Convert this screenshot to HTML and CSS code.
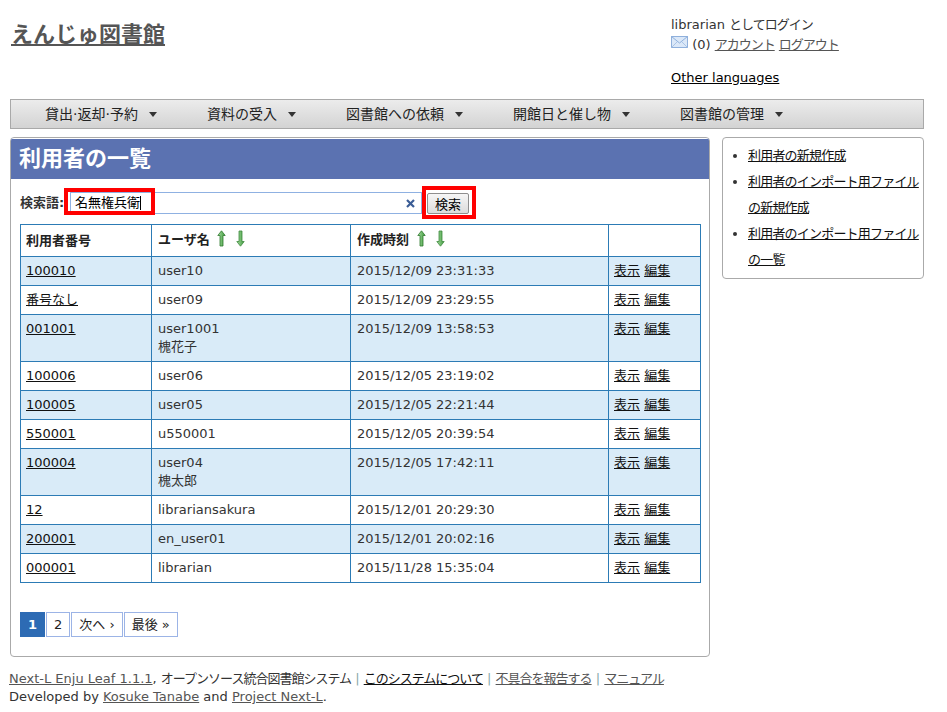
FILE: index.html
```html
<!DOCTYPE html>
<html lang="ja">
<head>
<meta charset="utf-8">
<title>利用者の一覧</title>
<link rel="stylesheet" href="styles.css">
</head>
<body>
<div class="page">
  <header class="header">
    <div class="brand"><a href="#">えんじゅ図書館</a></div>
    <div class="account">
      <div class="acc-line">librarian <span class="ja">としてログイン</span></div>
      <div class="acc-line">
        <svg class="mail" width="17" height="12" viewBox="0 0 17 12"><rect x="0.5" y="0.5" width="16" height="11" fill="#dbe8f8" stroke="#8fb0dc"/><path d="M0.5 0.5 L8.5 7 L16.5 0.5" fill="none" stroke="#8fb0dc"/><path d="M0.5 11.5 L6 6 M16.5 11.5 L11 6" fill="none" stroke="#aac4e6"/></svg>
        <span class="count">(0)</span> <a class="gray ja" href="#">アカウント</a> <a class="gray ja" href="#">ログアウト</a>
      </div>
      <div class="acc-lang"><a href="#">Other languages</a></div>
    </div>
  </header>

  <nav class="nav">
    <ul class="nav-list">
      <li class="nav-item">貸出·返却·予約<span class="caret"></span></li>
      <li class="nav-item">資料の受入<span class="caret"></span></li>
      <li class="nav-item">図書館への依頼<span class="caret"></span></li>
      <li class="nav-item">開館日と催し物<span class="caret"></span></li>
      <li class="nav-item">図書館の管理<span class="caret"></span></li>
    </ul>
  </nav>

  <div class="layout">
    <main class="panel">
      <h1 class="panel-title">利用者の一覧</h1>
      <div class="panel-body">
        <form class="search">
          <label class="search-label">検索語:</label>
          <div class="search-field">
            <div class="search-input"><span class="search-text">名無権兵衛</span><span class="caret-line"></span>
              <svg class="clear" width="9" height="9" viewBox="0 0 9 9"><path d="M1 1 L8 8 M8 1 L1 8" stroke="#3b5d96" stroke-width="2.2"/></svg>
            </div>
            <span class="mark mark-input"></span>
          </div>
          <div class="search-btn-wrap">
            <button type="button" class="search-btn">検索</button>
            <span class="mark mark-btn"></span>
          </div>
        </form>

        <table class="users">
          <colgroup><col class="c1"><col class="c2"><col class="c3"><col class="c4"></colgroup>
          <thead>
            <tr>
              <th>利用者番号</th>
              <th>ユーザ名 <span class="sort"><svg width="9" height="17" viewBox="0 0 9 17"><defs><linearGradient id="gu" x1="0" x2="1"><stop offset="0" stop-color="#a8dca0"/><stop offset="1" stop-color="#3d9a3d"/></linearGradient></defs><path d="M4.5 0.8 L8.2 5.5 L6 5.5 L6 16 L3 16 L3 5.5 L0.8 5.5 Z" fill="url(#gu)" stroke="#2f7a2f" stroke-width="0.8"/></svg><svg width="9" height="17" viewBox="0 0 9 17"><defs><linearGradient id="gd" x1="0" x2="1"><stop offset="0" stop-color="#a8dca0"/><stop offset="1" stop-color="#3d9a3d"/></linearGradient></defs><path d="M4.5 16.2 L8.2 11.5 L6 11.5 L6 1 L3 1 L3 11.5 L0.8 11.5 Z" fill="url(#gd)" stroke="#3f8a3f" stroke-width="0.8"/></svg></span></th>
              <th>作成時刻 <span class="sort"><svg width="9" height="17" viewBox="0 0 9 17"><path d="M4.5 0.8 L8.2 5.5 L6 5.5 L6 16 L3 16 L3 5.5 L0.8 5.5 Z" fill="url(#gu)" stroke="#2f7a2f" stroke-width="0.8"/></svg><svg width="9" height="17" viewBox="0 0 9 17"><path d="M4.5 16.2 L8.2 11.5 L6 11.5 L6 1 L3 1 L3 11.5 L0.8 11.5 Z" fill="url(#gd)" stroke="#3f8a3f" stroke-width="0.8"/></svg></span></th>
              <th></th>
            </tr>
          </thead>
          <tbody>
            <tr class="odd"><td><a href="#">100010</a></td><td>user10</td><td>2015/12/09 23:31:33</td><td><a href="#">表示</a> <a href="#">編集</a></td></tr>
            <tr><td><a href="#">番号なし</a></td><td>user09</td><td>2015/12/09 23:29:55</td><td><a href="#">表示</a> <a href="#">編集</a></td></tr>
            <tr class="odd"><td><a href="#">001001</a></td><td>user1001<br>槐花子</td><td>2015/12/09 13:58:53</td><td><a href="#">表示</a> <a href="#">編集</a></td></tr>
            <tr><td><a href="#">100006</a></td><td>user06</td><td>2015/12/05 23:19:02</td><td><a href="#">表示</a> <a href="#">編集</a></td></tr>
            <tr class="odd"><td><a href="#">100005</a></td><td>user05</td><td>2015/12/05 22:21:44</td><td><a href="#">表示</a> <a href="#">編集</a></td></tr>
            <tr><td><a href="#">550001</a></td><td>u550001</td><td>2015/12/05 20:39:54</td><td><a href="#">表示</a> <a href="#">編集</a></td></tr>
            <tr class="odd"><td><a href="#">100004</a></td><td>user04<br>槐太郎</td><td>2015/12/05 17:42:11</td><td><a href="#">表示</a> <a href="#">編集</a></td></tr>
            <tr><td><a href="#">12</a></td><td>librariansakura</td><td>2015/12/01 20:29:30</td><td><a href="#">表示</a> <a href="#">編集</a></td></tr>
            <tr class="odd"><td><a href="#">200001</a></td><td>en_user01</td><td>2015/12/01 20:02:16</td><td><a href="#">表示</a> <a href="#">編集</a></td></tr>
            <tr><td><a href="#">000001</a></td><td>librarian</td><td>2015/11/28 15:35:04</td><td><a href="#">表示</a> <a href="#">編集</a></td></tr>
          </tbody>
        </table>

        <div class="pager">
          <span class="pg current">1</span>
          <a class="pg" href="#">2</a>
          <a class="pg" href="#">次へ ›</a>
          <a class="pg" href="#">最後 »</a>
        </div>
      </div>
    </main>

    <aside class="side">
      <ul class="side-list">
        <li><a href="#">利用者の新規作成</a></li>
        <li><a href="#">利用者のインポート用ファイルの新規作成</a></li>
        <li><a href="#">利用者のインポート用ファイルの一覧</a></li>
      </ul>
    </aside>
  </div>

  <footer class="footer">
    <div><a class="gray" href="#">Next-L Enju Leaf 1.1.1</a>, <span class="ja">オープンソース統合図書館システム</span> <span class="sep">|</span> <a class="ja" href="#">このシステムについて</a> <span class="sep">|</span> <a class="gray ja" href="#">不具合を報告する</a> <span class="sep">|</span> <a class="gray ja" href="#">マニュアル</a></div>
    <div>Developed by <a class="gray" href="#">Kosuke Tanabe</a> and <a class="gray" href="#">Project Next-L</a>.</div>
  </footer>
</div>
</body>
</html>
```

FILE: styles.css
```css
html, body {
  margin: 0;
  padding: 0;
  background: #fff;
}
body {
  font-family: "DejaVu Sans", "Noto Sans CJK JP", sans-serif;
  font-size: 13px;
  line-height: 18px;
  color: #333;
}
a {
  color: #111;
  text-decoration: underline;
}
a.gray {
  color: #555;
}
.ja {
  letter-spacing: -1px;
}
.page {
  width: 914px;
  padding: 0 10px;
}

/* header */
.header {
  display: flex;
  justify-content: space-between;
  padding-top: 15px;
}
.brand {
  margin-top: 5px;
  margin-left: 1px;
  font-size: 22px;
  line-height: 30px;
  font-weight: bold;
}
.brand a {
  color: #555;
}
.account {
  width: 253px;
  line-height: 20px;
}
.acc-line {
  white-space: nowrap;
}
.mail {
  vertical-align: 1px;
}
.count {
  color: #333;
}
.acc-lang {
  margin-top: 13px;
}
.acc-lang a {
  color: #000;
}

/* nav */
.nav {
  margin-top: 11px;
  height: 28px;
  border: 1px solid #a9a9a9;
  background: linear-gradient(#ececec, #d3d3d3);
}
.nav-list {
  display: flex;
  list-style: none;
  margin: 0;
  padding: 0 0 0 9px;
}
.nav-item {
  padding: 0 25px;
  font-size: 14px;
  line-height: 28px;
  color: #222;
  white-space: nowrap;
}
.caret {
  display: inline-block;
  margin-left: 11px;
  width: 0;
  height: 0;
  border-left: 4px solid transparent;
  border-right: 4px solid transparent;
  border-top: 5px solid #333;
  vertical-align: 2px;
}

/* layout */
.layout {
  display: flex;
  align-items: flex-start;
  gap: 12px;
  margin-top: 8px;
}
.panel {
  width: 698px;
  border: 1px solid #aaa;
  border-radius: 4px;
  overflow: hidden;
}
.panel-title {
  margin: 0;
  height: 41px;
  padding-left: 8px;
  background: #5b72b1;
  color: #fff;
  font-size: 22px;
  line-height: 40px;
  font-weight: bold;
  border-top: 1px solid #fff;
  box-sizing: border-box;
}
.panel-body {
  padding: 13px 9px 19px 9px;
}

/* search */
.search {
  display: flex;
  align-items: center;
  height: 22px;
}
.search-label {
  font-weight: bold;
  color: #333;
  width: 50px;
}
.search-field {
  position: relative;
}
.search-input {
  display: flex;
  align-items: center;
  width: 346px;
  height: 20px;
  border: 1px solid #8fb1e2;
  background: #fff;
  color: #000;
  padding-left: 4px;
}
.search-text {
  line-height: 20px;
}
.caret-line {
  display: inline-block;
  width: 1px;
  height: 14px;
  background: #000;
}
.clear {
  margin-left: auto;
  margin-right: 6px;
}
.search-btn-wrap {
  position: relative;
  margin-left: 5px;
}
.search-btn {
  display: block;
  width: 42px;
  height: 21px;
  padding: 0;
  border: 1px solid #8e8e8e;
  border-radius: 2px;
  background: linear-gradient(#f6f6f6, #dcdcdc);
  font-family: "DejaVu Sans", "Noto Sans CJK JP", sans-serif;
  font-size: 13px;
  color: #000;
}
.mark {
  position: absolute;
  border: 4px solid #f00;
  box-sizing: border-box;
  pointer-events: none;
}
.mark-input {
  left: -6px;
  top: -4px;
  width: 91px;
  height: 27px;
}
.mark-btn {
  left: -5px;
  top: -7px;
  width: 54px;
  height: 33px;
}

/* table */
.users {
  width: 680px;
  margin-top: 10px;
  border-collapse: collapse;
  table-layout: fixed;
}
.users col.c1 { width: 131px; }
.users col.c2 { width: 199px; }
.users col.c3 { width: 258px; }
.users col.c4 { width: 92px; }
.users th, .users td {
  border: 1px solid #2c7bb5;
  padding: 5px 5px;
  text-align: left;
  vertical-align: top;
}
.users th {
  height: 19px;
  padding: 5px 5px 4px;
  font-weight: bold;
  color: #222;
  vertical-align: middle;
}
.users td:nth-child(2), .users th:nth-child(2),
.users td:nth-child(3), .users th:nth-child(3) {
  padding-left: 6px;
}
.users tr.odd td {
  background: #d9ebf8;
}
.sort {
  display: inline-block;
  margin-left: 3px;
  vertical-align: -3px;
}
.sort svg {
  margin-right: 10px;
}

/* pager */
.pager {
  display: flex;
  gap: 1px;
  margin-top: 29px;
}
.pg {
  display: block;
  height: 23px;
  line-height: 23px;
  padding: 0 7px;
  border: 1px solid #9cb4e6;
  color: #222;
  text-decoration: none;
}
.pg.current {
  background: #2d6bb4;
  border-color: #2d6bb4;
  color: #fff;
  font-weight: bold;
}

/* sidebar */
.side {
  width: 200px;
  border: 1px solid #aaa;
  border-radius: 4px;
}
.side-list {
  margin: 0;
  padding: 5px 2px 5px 25px;
  line-height: 26px;
  letter-spacing: -0.8px;
}
.side-list a {
  color: #111;
}

/* footer */
.footer {
  margin-top: 13px;
  margin-left: -1px;
  line-height: 18px;
  color: #333;
}
.sep {
  color: #8aa;
}
```
